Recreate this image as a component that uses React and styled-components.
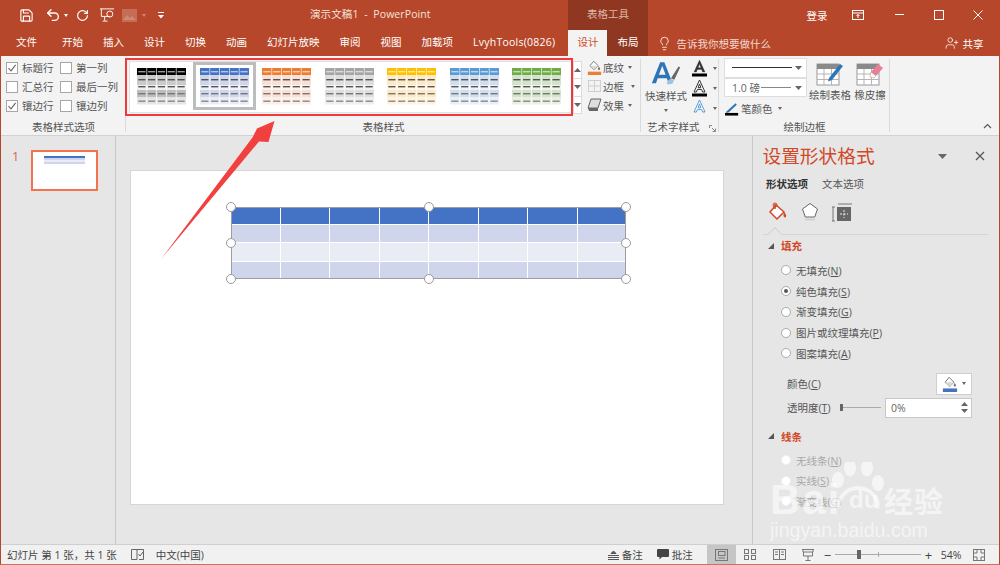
import React from "react";
import styled, { createGlobalStyle } from "styled-components";
import { Save, Undo2, RotateCw, Lightbulb, UserPlus } from "lucide-react";

const FONT = `"Open Sans", "Noto Sans CJK SC", "Noto Sans", sans-serif`;
const BRAND = "#b7472a";
const DARK = "#8f3720";
const ACCENT = "#d24726";

const Global = createGlobalStyle`
  html, body { margin: 0; padding: 0; background: #e6e6e6; }
  * { box-sizing: border-box; }
  body { font-family: ${FONT}; font-size: 10.5px; color: #444; }
`;

const Window = styled.div`
  position: relative; width: 1000px; height: 565px; overflow: hidden;
  display: flex; flex-direction: column; background: #e6e6e6;
  border-left: 1px solid ${BRAND}; border-right: 1px solid ${BRAND}; border-bottom: 1px solid #c9735c;
`;
/* ---------- title ---------- */
const TitleBar = styled.div`display: flex; height: 30px; background: ${BRAND}; color: #fff; margin-left: -1px;`;
const Qat = styled.div`width: 310px; display: flex; align-items: center; padding-left: 19px; color: #fff;`;
const QatItem = styled.span`display: inline-flex; align-items: center; margin-right: ${p => p.$gap ?? 0}px; margin-left: ${p => p.$ml ?? 0}px; opacity: ${p => p.$dim ? 0.35 : 1};`;
const DocTitle = styled.div`width: 258px; font-size: 10.5px; line-height: 29px; color: #f6e4de; letter-spacing: .1px; white-space: pre;`;
const ContextLabel = styled.div`width: 80px; background: ${DARK}; color: #dfb7a9; font-size: 10.5px; line-height: 29px; text-align: center;`;
const TitleRight = styled.div`flex: 1; display: flex; align-items: center; padding-left: 158px; font-size: 10.5px;`;
const TitleBtn = styled.span`display: inline-flex; width: ${p => p.$w}px; justify-content: center; color: #fff;`;

/* ---------- tabs ---------- */
const TabBar = styled.div`display: flex; height: 26px; background: ${BRAND}; padding-left: 6px; margin-left: -1px; align-items: stretch;`;
const Tab = styled.div`
  padding: 0 10px; line-height: 25px; font-size: 10.5px; white-space: nowrap;
  color: ${p => p.$active ? ACCENT : "#fff"};
  background: ${p => p.$active ? "#f3f3f3" : p.$ctx ? DARK : "transparent"};
  letter-spacing: ${p => p.$wide ? ".25px" : "0"};
  margin-left: ${p => p.$ml ?? 0}px;
`;
const ContextTab = styled(Tab)`padding: 0; width: ${p => p.$w}px; text-align: center;`;
const Tell = styled.div`display: flex; align-items: center; gap: 4px; margin-left: 9px; color: #f3d9d0; font-size: 10.5px; width: 288px;`;
const Share = styled.div`display: flex; align-items: center; gap: 3px; color: #fff; font-size: 10.5px;`;

/* ---------- ribbon ---------- */
const Ribbon = styled.div`position: relative; display: flex; height: 80px; background: #f3f3f3; border-bottom: 1px solid #d2d2d2;`;
const Group = styled.div`
  position: relative; width: ${p => p.$w}px; display: flex; flex-direction: column; height: 79px;
  &::after { content: ""; position: absolute; right: 0; top: 3px; bottom: 3px; width: 1px; background: #dadada; }
`;
const GroupBody = styled.div`flex: 1; display: flex; min-height: 0;`;
const GroupLabel = styled.div`
  height: 17px; line-height: 18px; font-size: 10.5px; color: #555; position: relative;
  text-align: ${p => p.$left ? "left" : "center"}; padding-left: ${p => p.$left ? "6px" : "0"};
`;
const Launcher = styled.svg`position: absolute; right: 3px; top: 7px;`;

const OptionGrid = styled.div`display: grid; grid-template-columns: 54px 60px; grid-auto-rows: 19px; padding: 2px 0 0 5px;`;
const CheckRow = styled.label`display: flex; align-items: center; gap: 4px; white-space: nowrap; color: #555;`;
const CheckBox = styled.span`
  width: 12px; height: 12px; background: #fff; border: 1px solid #a6a6a6; display: inline-flex;
  align-items: center; justify-content: center; flex: none;
`;

const GalleryWrap = styled.div`display: flex; padding: 5px 0 0 3px; height: 58px;`;
const Gallery = styled.div`
  width: 444px; height: 52px; background: #fff; border: 1px solid #e2e2e2;
  display: flex; align-items: flex-start; padding: 0 0 0 .5px; border-right: 0;
`;
const GalleryCell = styled.div`
  width: 62.5px; height: 48px; flex: none; padding: 6px 0 0 6.5px;
  ${p => p.$selected && `outline: 3px solid #bdbdbd; outline-offset: -3px;`}
`;
const Scroller = styled.div`width: 9px; height: 53px; display: flex; flex-direction: column; background: #fff; border: 1px solid #dcdcdc; margin-right: 5px;`;
const ScrollBtn = styled.div`flex: 1; display: flex; align-items: center; justify-content: center; border-top: ${p => p.$first ? 0 : "1px solid #dcdcdc"};`;
const EffectList = styled.div`display: flex; flex-direction: column; gap: 1px; margin-top: -3px;`;
const EffectItem = styled.div`display: flex; align-items: center; gap: 1px; height: 18.5px; white-space: nowrap; color: #555;`;
const Caret = styled.span`
  display: inline-block; width: 0; height: 0; margin-left: ${p => p.$ml ?? 3}px; margin-top: ${p => p.$mt ?? 0}px;
  border-left: 2.5px solid transparent; border-right: 2.5px solid transparent; border-top: 3px solid ${p => p.$c ?? "#666"};
`;
const Highlight = styled.div`position: absolute; left: 124px; top: 2px; width: 448px; height: 58px; border: 2px solid #f0393c; pointer-events: none;`;

const ArtBig = styled.div`width: 50px; display: flex; flex-direction: column; align-items: center; padding-top: 5px;`;
const BigLabel = styled.div`font-size: 10.5px; line-height: 14px; white-space: nowrap; margin-top: ${p => p.$mt ?? 2}px; color: #555;`;
const ArtSmall = styled.div`display: flex; flex-direction: column; gap: 2px; padding-top: 3px;`;
const ArtItem = styled.div`display: flex; align-items: center; height: 18px; gap: 2px;`;

const PenCol = styled.div`width: 90px; padding: 2px 0 0 5px; display: flex; flex-direction: column; flex: none;`;
const PenBox = styled.div`
  width: 83px; height: ${p => p.$h}px; background: #fff; border: 1px solid #dedede; display: flex; align-items: center;
  justify-content: space-between; padding: 0 4px 0 7px; font-size: 10.5px; color: #666;
`;
const PenRule = styled.svg`margin-left: -4px;`;
const PenColor = styled.div`display: flex; align-items: center; gap: 2px; height: 20px; padding: 3px 0 0 1px; color: #555;`;
const DrawBtn = styled.div`width: ${p => p.$w}px; display: flex; flex-direction: column; align-items: center; padding-top: 4px; flex: none;`;
const Collapse = styled.svg`position: absolute; right: 7px; bottom: 6px;`;

/* ---------- workspace ---------- */
const Workspace = styled.div`flex: 1; display: flex; min-height: 0; border-bottom: 1px solid #cfcfcf;`;
const SlidePane = styled.div`width: 115px; flex: none; border-right: 1px solid #c8c8c8; display: flex; padding: 14px 0 0 11px; gap: 12px;`;
const SlideNo = styled.div`width: 7px; font-size: 12.5px; line-height: 14px; color: #d8644a;`;
const SlideThumb = styled.div`width: 67px; height: 41px; background: #fff; border: 2px solid #f4734f; padding: 4px 0 0 11px;`;
const ThumbBar = styled.div`width: 41px; height: ${p => p.$h}px; background: ${p => p.$c};`;
const Editor = styled.div`flex: 1; padding: 34px 0 0 14px;`;
const Slide = styled.div`position: relative; width: 594px; height: 335px; background: #fff; border: 1px solid #d6d6d6;`;
const Shape = styled.div`position: absolute; left: 100px; top: 36px; width: 395px; height: 72px; outline: 1px solid #9d9d9d; outline-offset: -1px;`;
const TableGrid = styled.div`display: grid; grid-template-rows: 17px 17px 18px 17px; height: 100%; gap: 1px; background: #fff;`;
const TableRow = styled.div`display: grid; grid-template-columns: repeat(8, 1fr); gap: 1px;`;
const TableCell = styled.div`background: ${p => p.$c};`;
const Handle = styled.span`
  position: absolute; width: 10px; height: 10px; border-radius: 50%; background: #fff; border: 1.5px solid #9b9b9b;
  left: ${p => p.$x}%; top: ${p => p.$y}%; transform: translate(-50%, -50%);
`;

/* ---------- task pane ---------- */
const TaskPane = styled.div`width: 247px; flex: none; border-left: 1px solid #c8c8c8; position: relative; overflow: hidden; color: #555;`;
const PaneHead = styled.div`display: flex; align-items: center; height: 40px; padding: 0 14px 0 9.5px;`;
const PaneTitle = styled.div`flex: 1; font-size: 18.7px; color: ${ACCENT}; line-height: 38px;`;
const PaneMenu = styled.svg`margin-right: 28px;`;
const PaneTabs = styled.div`display: flex; gap: 14px; padding: 0 0 0 13px; height: 19px; line-height: 16px;`;
const PaneTab = styled.div`font-weight: ${p => p.$on ? 700 : 400}; color: ${p => p.$on ? "#333" : "#555"};`;
const PaneIcons = styled.div`display: flex; gap: 13.5px; align-items: flex-start; padding: 7px 0 0 14px; height: 39px;`;
const Rule = styled.div`position: relative; height: 1px; margin: 0 11px 0 10px; background: #d4d4d4;
  &::before { content: ""; position: absolute; left: 7px; top: -5px; width: 9px; height: 9px; border-left: 1px solid #d4d4d4; border-top: 1px solid #d4d4d4; background: #e6e6e6; transform: rotate(45deg); }
`;
const SectionHead = styled.div`display: flex; align-items: center; gap: 7px; padding-left: 15px; height: 17px; margin-top: ${p => p.$mt}px; font-weight: 700; color: ${ACCENT};`;
const Tri = styled.span`width: 0; height: 0; border-bottom: 6px solid #555; border-left: 6px solid transparent;`;
const RadioList = styled.div`display: flex; flex-direction: column; padding: ${p => p.$pt}px 0 0 28px;`;
const RadioRow = styled.div`display: flex; align-items: center; gap: 5px; height: ${p => p.$h ?? 20.75}px; color: ${p => p.$off ? "#a8a8a8" : "#555"}; white-space: nowrap;`;
const Radio = styled.span`
  width: 10px; height: 10px; border-radius: 50%; flex: none; background: #fff; border: 1px solid ${p => p.$off ? "#f2f2f2" : "#ababab"};
  display: inline-flex; align-items: center; justify-content: center;
  &::after { content: ""; width: 4px; height: 4px; border-radius: 50%; background: ${p => p.$on ? "#555" : "transparent"}; }
`;
const U = styled.span`text-decoration: underline;`;
const ColorRow = styled.div`display: flex; align-items: center; justify-content: space-between; padding: 0 27px 0 34px; height: ${p => p.$h}px; margin-top: ${p => p.$mt ?? 0}px;`;
const ColorBtn = styled.div`width: 36px; height: 22px; background: #fff; border: 1px solid #cfcfcf; display: flex; align-items: center; justify-content: center; gap: 4px;`;
const Slider = styled.div`position: relative; width: 41px; height: 1px; background: #aaa;
  &::before { content: ""; position: absolute; left: 0; top: -3px; width: 3px; height: 7px; background: #666; }
`;
const SpinInput = styled.div`width: 87px; height: 20px; background: #fff; border: 1px solid #c8c8c8; display: flex; align-items: center; justify-content: space-between; padding: 0 3px 0 5px; color: #666;`;
const Spin = styled.div`display: flex; flex-direction: column; gap: 3px;`;
const SliderGroup = styled.div`display: flex; align-items: center; gap: 4px;`;

/* ---------- watermark + arrow ---------- */
const Watermark = styled.div`position: absolute; left: 769px; top: 466px; width: 185px; height: 80px; color: rgba(255,255,255,.6); pointer-events: none;`;
const WmTop = styled.div`display: flex; align-items: flex-end; height: 50px; font-family: "Liberation Sans", sans-serif; font-weight: 700; line-height: 32px;`;
const WmBai = styled.span`font-size: 42px; width: 79px; letter-spacing: 2px;`;
const WmDu = styled.span`font-size: 24px; width: 35px;`;
const WmCn = styled.span`font-size: 29px; font-family: "Noto Sans CJK SC", sans-serif; font-weight: 700; letter-spacing: 1px; line-height: 32px;`;
const WmUrl = styled.div`font-family: "Liberation Sans", sans-serif; font-size: 19.6px; line-height: 28px; white-space: nowrap;`;
const WmPaw = styled.svg`position: absolute; left: 58px; top: -4px;`;
const ArrowLayer = styled.svg`position: absolute; left: -1px; top: 0; pointer-events: none;`;

/* ---------- status ---------- */
const Status = styled.div`height: 19px; background: #f1f1f1; display: flex; align-items: center; padding-left: 6px; color: #444; flex: none;`;
const StatusText = styled.span`margin-right: ${p => p.$mr ?? 0}px; margin-left: ${p => p.$ml ?? 0}px; white-space: nowrap;`;
const StatusBtn = styled.span`display: inline-flex; align-items: center; gap: 3px; margin-right: ${p => p.$mr ?? 0}px; white-space: nowrap;`;
const ViewBtn = styled.span`width: 29px; height: 19px; display: inline-flex; align-items: center; justify-content: center; background: ${p => p.$on ? "#c6c6c6" : "transparent"};`;
const ZoomTrack = styled.span`position: relative; width: 86px; height: 1px; background: #aaa; margin: 0 3px;
  &::before { content: ""; position: absolute; left: 22px; top: -4px; width: 4px; height: 9px; background: #666; }
  &::after { content: ""; position: absolute; left: 43px; top: -2px; width: 1px; height: 5px; background: #aaa; }
`;
const ZoomGlyph = styled.span`font-size: 13px; line-height: 18px; width: 9px; text-align: center; color: #444;`;

const styles = [
  ["#000000", "#cbcbcb", "#efefef", "#bdbdbd", "#e5e5e5"],
  ["#4472c4", "#cfd5ea", "#eef0f8", "#cfd5ea", "#e9ebf5"],
  ["#ed7d31", "#f9dfd4", "#fdf3ee", "#f9dfd4", "#fceee8"],
  ["#a5a5a5", "#dedede", "#f1f1f1", "#dedede", "#eeeeee"],
  ["#ffc000", "#fde9c4", "#fff6e5", "#fde9c4", "#fef3df"],
  ["#5b9bd5", "#d0deef", "#edf2f9", "#d0deef", "#e8eff7"],
  ["#70ad47", "#d3e4ca", "#eef5ea", "#d3e4ca", "#e7f0e1"],
];

function TableStyle({ colors }) {
  const rows = [[0, 7], [7, 10], [17, 5], [22, 7.5], [29.5, 7]];
  const dash = ["#ffffff99", "#555", "#555", "#777", "#888"];
  return (
    <svg width="49" height="37" viewBox="0 0 49 37">
      {rows.map(([y, h], r) => <rect key={r} x="0" y={y} width="49" height={h} fill={colors[r]} />)}
      {[1, 2, 3, 4].map(c => <rect key={c} x={c * 9.8 - 0.4} y="0" width="0.8" height="37" fill="#ffffff" opacity=".8" />)}
      {rows.map(([y, h], r) => [0, 1, 2, 3, 4].map(c => (
        <rect key={`${r}${c}`} x={c * 9.8 + 1.3} y={[3, 11, 18, 25, 32.5][r]} width="7.2" height="1.4" fill={dash[r]} />
      )))}
    </svg>
  );
}

const Check = ({ on }) => (
  <CheckBox>{on && <svg width="10" height="10" viewBox="0 0 10 10"><path d="M1.5 5.2 4 7.8 8.6 1.8" fill="none" stroke="#666" strokeWidth="1.1" /></svg>}</CheckBox>
);
const Bucket = ({ bar = "#ed7d31", w = 18 }) => (
  <svg width={w} height={w} viewBox="0 0 18 18">
    <path d="M8 1.5 13.5 7l-5 5L3.5 7z" fill="#fff" stroke="#666" />
    <path d="M3.5 7h10l-5 5z" fill="#d9d9d9" />
    <path d="M14 7.5c1.2 1.6 1.8 2.6 1.8 3.3a1.3 1.3 0 0 1-2.6 0c0-.7.3-1.7.8-3.3z" fill="#777" />
    <rect x="1" y="14" width="16" height="4" fill={bar} />
  </svg>
);
const LetterA = ({ stroke = "#333", fill = "#333", bar = "#000", o }) => (
  <svg width="17" height="18" viewBox="0 0 17 18">
    <path d="M8.5 1 3 13h2.4l1-2.6h4.2l1 2.6H14zM7.1 8.7l1.4-3.8 1.4 3.8z" fill={o ? "#fff" : fill} stroke={stroke} strokeWidth={o ? 1 : .3} />
    {bar && <rect x="1" y="14.5" width="15" height="3" fill={bar} />}
  </svg>
);
const TableDraw = ({ children }) => (
  <svg width="28" height="26" viewBox="0 0 28 26">
    <rect x="1" y="4" width="22" height="21" fill="#fff" stroke="#999" />
    <rect x="1" y="4" width="22" height="5" fill="#8a8a8a" />
    <path d="M1 14h22M1 19.500h22M8 9v16M15.500 9v16" stroke="#b5b5b5" />
    {children}
  </svg>
);
const Tiny = ({ up }) => (
  <svg width="7" height="4" viewBox="0 0 7 4"><path d={up ? "M3.5 0 7 4H0z" : "M0 0h7L3.5 4z"} fill="#666" /></svg>
);
const Lbl = ({ t, k }) => <span>{t}(<U>{k}</U>)</span>;

export default function App() {
  return (
    <Window>
      <Global />
      <TitleBar>
        <Qat>
          <QatItem $gap={11}><Save size={15} strokeWidth={1.8} /></QatItem>
          <QatItem $gap={8}><Undo2 size={16} strokeWidth={2} /><Caret $c="#fff" /></QatItem>
          <QatItem $gap={10}><RotateCw size={13} strokeWidth={2.2} /></QatItem>
          <QatItem $gap={7}>
            <svg width="16" height="16" viewBox="0 0 17 16" fill="none" stroke="#fff"><path d="M1 1.5h15M2.5 1.5v8h9" /><circle cx="11.5" cy="7" r="3.2" /><path d="M6 10v4M4 14.5h5" /></svg>
          </QatItem>
          <QatItem $dim>
            <svg width="15" height="13" viewBox="0 0 15 13"><rect width="15" height="13" fill="#fff" opacity=".6" /><path d="M1 11l4-5 3 3 2-2 4 4z" fill="#fff" /></svg>
            <Caret $c="#fff" $ml={5} />
          </QatItem>
          <QatItem $ml={12}>
            <svg width="6" height="7" viewBox="0 0 6 7"><path d="M0 0h6v1H0zM0 3h6L3 6.5z" fill="#fff" /></svg>
          </QatItem>
        </Qat>
        <DocTitle>{"演示文稿1  -  PowerPoint"}</DocTitle>
        <ContextLabel>表格工具</ContextLabel>
        <TitleRight>
          <TitleBtn $w={22}>登录</TitleBtn>
          <TitleBtn $w={60}>
            <svg width="12" height="10" viewBox="0 0 12 10" fill="none" stroke="#fff"><rect x=".5" y=".5" width="11" height="9" /><path d="M.5 3h11M6 8V4.5M4.5 6 6 4.5 7.5 6" /></svg>
          </TitleBtn>
          <TitleBtn $w={22}><svg width="9" height="2"><rect width="9" height="1" fill="#fff" /></svg></TitleBtn>
          <TitleBtn $w={57}><svg width="10" height="10" fill="none" stroke="#fff"><rect x=".5" y=".5" width="9" height="9" /></svg></TitleBtn>
          <TitleBtn $w={22}><svg width="10" height="10" stroke="#fff"><path d="M.5.5l9 9M9.5.5l-9 9" /></svg></TitleBtn>
        </TitleRight>
      </TitleBar>

      <TabBar>
        <Tab>文件</Tab>
        <Tab $ml={5}>开始</Tab><Tab>插入</Tab><Tab>设计</Tab><Tab>切换</Tab><Tab>动画</Tab>
        <Tab>幻灯片放映</Tab><Tab>审阅</Tab><Tab>视图</Tab><Tab>加载项</Tab><Tab $wide>LvyhTools(0826)</Tab>
        <ContextTab $active $w={39} $ml={3}>设计</ContextTab>
        <ContextTab $ctx $w={41}>布局</ContextTab>
        <Tell><Lightbulb size={15} strokeWidth={1.3} color="#fff" />告诉我你想要做什么</Tell>
        <Share><UserPlus size={14} strokeWidth={1.3} />共享</Share>
      </TabBar>

      <Ribbon>
        <Group $w={125}>
          <GroupBody>
            <OptionGrid>
              <CheckRow><Check on />标题行</CheckRow><CheckRow><Check />第一列</CheckRow>
              <CheckRow><Check />汇总行</CheckRow><CheckRow><Check />最后一列</CheckRow>
              <CheckRow><Check on />镶边行</CheckRow><CheckRow><Check />镶边列</CheckRow>
            </OptionGrid>
          </GroupBody>
          <GroupLabel>表格样式选项</GroupLabel>
        </Group>
        <Group $w={515}>
          <GroupBody>
            <GalleryWrap>
              <Gallery>
                {styles.map((c, i) => (
                  <GalleryCell key={i} $selected={i === 1}><TableStyle colors={c} /></GalleryCell>
                ))}
              </Gallery>
              <Scroller>
                <ScrollBtn $first><Tiny up /></ScrollBtn>
                <ScrollBtn><Tiny /></ScrollBtn>
                <ScrollBtn><Tiny /></ScrollBtn>
              </Scroller>
              <EffectList>
                <EffectItem><Bucket w={15} />底纹<Caret /></EffectItem>
                <EffectItem>
                  <svg width="15" height="14" viewBox="0 0 15 14" fill="none" stroke="#cfcfcf"><rect x="1.5" y="1.5" width="12" height="11" /><path d="M7.500 1.500v11M1.500 7h12" /></svg>
                  边框<Caret $ml={6} />
                </EffectItem>
                <EffectItem>
                  <svg width="15" height="14" viewBox="0 0 15 14"><path d="M4 1h10l-3 9H1z" fill="#ddd" stroke="#666" /><path d="M1 10h10v3H2z" fill="#666" /></svg>
                  效果<Caret />
                </EffectItem>
              </EffectList>
            </GalleryWrap>
          </GroupBody>
          <GroupLabel>表格样式</GroupLabel>
        </Group>
        <Group $w={78}>
          <GroupBody>
            <ArtBig>
              <svg width="30" height="26" viewBox="0 0 36 30">
                <path d="M11 1h5l10 25h-5l-2-6H8l-2 6H1zM9.5 16h8L13.5 5z" fill="#2e75b6" />
                <path d="M24 20 33 6l2 1-7 15z" fill="#666" /><path d="M19 27c0-4 3-6 5.500-6l3 1.500c0 3-4 6-8.500 4.500z" fill="#9dc3e6" />
              </svg>
              <BigLabel>快速样式</BigLabel>
              <Caret $ml={0} $mt={6} />
            </ArtBig>
            <ArtSmall>
              <ArtItem><LetterA /><Caret /></ArtItem>
              <ArtItem><LetterA o /><Caret /></ArtItem>
              <ArtItem><LetterA o stroke="#5b9bd5" bar={null} /><Caret /></ArtItem>
            </ArtSmall>
          </GroupBody>
          <GroupLabel $left>艺术字样式
            <Launcher width="7" height="7" viewBox="0 0 7 7" fill="none" stroke="#888"><path d="M.5 3V.5H3M3 3l3 3M6.500 3.500v3h-3" /></Launcher>
          </GroupLabel>
        </Group>
        <Group $w={171}>
          <GroupBody>
            <PenCol>
              <PenBox $h={20}>
                <svg width="60" height="2"><rect width="60" height="1" fill="#333" /></svg><Tiny />
              </PenBox>
              <PenBox $h={19}>
                <span>1.0 磅</span><PenRule width="30" height="2"><rect width="30" height="1" fill="#888" /></PenRule><Tiny />
              </PenBox>
              <PenColor>
                <svg width="14" height="14" viewBox="0 0 16 15"><path d="M2 10 12 1l1.500 1.500L4 11.500 1.500 12z" fill="#2e75b6" /><rect x="0" y="12" width="15" height="3" fill="#000" /></svg>
                笔颜色<Caret />
              </PenColor>
            </PenCol>
            <DrawBtn $w={42}>
              <TableDraw><path d="M13 18 24 4l3 2-11 14-4 1.500z" fill="#2e75b6" /></TableDraw>
              <BigLabel>绘制表格</BigLabel>
            </DrawBtn>
            <DrawBtn $w={38}>
              <TableDraw><path d="M15 12 22 4l5 4-7 8z" fill="#e77f96" /><path d="M15 12l5 4-2 2-4-1z" fill="#fff" stroke="#c77" strokeWidth=".5" /></TableDraw>
              <BigLabel>橡皮擦</BigLabel>
            </DrawBtn>
          </GroupBody>
          <GroupLabel>绘制边框</GroupLabel>
        </Group>
        <Highlight />
        <Collapse width="9" height="6" viewBox="0 0 9 6" fill="none" stroke="#555" strokeWidth="1.100"><path d="M1 5l3.500-3.500L8 5" /></Collapse>
      </Ribbon>

      <Workspace>
        <SlidePane>
          <SlideNo>1</SlideNo>
          <SlideThumb>
            <ThumbBar $h={2} $c="#4472c4" />
            <ThumbBar $h={2} $c="#cfd5ea" />
            <ThumbBar $h={2} $c="#e9ebf5" />
            <ThumbBar $h={2} $c="#cfd5ea" />
          </SlideThumb>
        </SlidePane>
        <Editor>
          <Slide>
            <Shape>
              <TableGrid>
                {["#4472c4", "#cfd5ea", "#e9ebf5", "#cfd5ea"].map((c, r) => (
                  <TableRow key={r}>{Array.from({ length: 8 }, (_, i) => <TableCell key={i} $c={c} />)}</TableRow>
                ))}
              </TableGrid>
              {[[0, 0], [50, 0], [100, 0], [0, 50], [100, 50], [0, 100], [50, 100], [100, 100]].map(([x, y]) => (
                <Handle key={`${x}-${y}`} $x={x} $y={y} />
              ))}
            </Shape>
          </Slide>
        </Editor>
        <TaskPane>
          <PaneHead>
            <PaneTitle>设置形状格式</PaneTitle>
            <PaneMenu width="9" height="5"><path d="M0 0h9L4.500 5z" fill="#666" /></PaneMenu>
            <svg width="10" height="10" stroke="#555" strokeWidth="1.200"><path d="M1 1l8 8M9 1 1 9" /></svg>
          </PaneHead>
          <PaneTabs><PaneTab $on>形状选项</PaneTab><PaneTab>文本选项</PaneTab></PaneTabs>
          <PaneIcons>
            <svg width="20" height="20" viewBox="0 0 20 20">
              <path d="M9 3 17 10l-7 7-7-7z" fill="#fff" stroke={ACCENT} strokeWidth="1.500" />
              <path d="M8 2V7" stroke={ACCENT} strokeWidth="1.500" /><circle cx="8" cy="3" r="2" fill="none" stroke={ACCENT} />
              <path d="M17 10c1.500 1.500 2.500 3 2 5-1 1-2.500 0-2.500-1.500z" fill={ACCENT} />
            </svg>
            <svg width="18" height="20" viewBox="0 0 18 20">
              <path d="M9 1.500 16.500 7l-2.800 8H4.300L1.500 7z" fill="#fff" stroke="#666" />
              <path d="M4 17.500h10" stroke="#ccc" strokeWidth="1.500" />
            </svg>
            <svg width="20" height="20" viewBox="0 0 20 20">
              <path d="M6 2h14M1 5v14M0 5h3M0 19h3" stroke="#777" fill="none" />
              <rect x="5" y="5" width="14" height="14" fill="#666" />
              <path d="M12 8v8M8 12h8" stroke="#eee" strokeDasharray="2 1.500" />
            </svg>
          </PaneIcons>
          <Rule />
          <SectionHead $mt={2}><Tri />填充</SectionHead>
          <RadioList $pt={6}>
            <RadioRow><Radio /><Lbl t="无填充" k="N" /></RadioRow>
            <RadioRow><Radio $on /><Lbl t="纯色填充" k="S" /></RadioRow>
            <RadioRow><Radio /><Lbl t="渐变填充" k="G" /></RadioRow>
            <RadioRow><Radio /><Lbl t="图片或纹理填充" k="P" /></RadioRow>
            <RadioRow><Radio /><Lbl t="图案填充" k="A" /></RadioRow>
          </RadioList>
          <ColorRow $h={22} $mt={9}>
            <Lbl t="颜色" k="C" />
            <ColorBtn><Bucket bar="#4472c4" w={16} /><Caret $ml={0} /></ColorBtn>
          </ColorRow>
          <ColorRow $h={20} $mt={3}>
            <Lbl t="透明度" k="T" />
            <SliderGroup>
              <Slider />
              <SpinInput>0%<Spin><Tiny up /><Tiny /></Spin></SpinInput>
            </SliderGroup>
          </ColorRow>
          <SectionHead $mt={10}><Tri />线条</SectionHead>
          <RadioList $pt={5}>
            <RadioRow $off $h={20.500}><Radio $off /><Lbl t="无线条" k="N" /></RadioRow>
            <RadioRow $off $h={20.500}><Radio $off /><Lbl t="实线" k="S" /></RadioRow>
            <RadioRow $off $h={20.500}><Radio $off /><Lbl t="渐变线" k="G" /></RadioRow>
          </RadioList>
        </TaskPane>
      </Workspace>

      <Status>
        <StatusText $mr={14}>幻灯片 第 1 张，共 1 张</StatusText>
        <StatusBtn $mr={12}>
          <svg width="13" height="11" viewBox="0 0 13 11" fill="none" stroke="#666"><path d="M.5.5h5.500v10H.5zM6 .5h6.500v10H8" /><path d="M7.500 5l1.500 2 3-4" /></svg>
        </StatusBtn>
        <StatusText $mr={404}>中文(中国)</StatusText>
        <StatusBtn $mr={14}>
          <svg width="11" height="10" viewBox="0 0 11 10" stroke="#555"><path d="M5.500 1 3 3.500h5zM0 5.500h11M0 7.500h11M0 9.500h11" fill="#555" /></svg>
          备注
        </StatusBtn>
        <StatusBtn $mr={14}>
          <svg width="12" height="11" viewBox="0 0 12 11"><path d="M1 0h10a1 1 0 0 1 1 1v6a1 1 0 0 1-1 1H5L2.500 10.500V8H1a1 1 0 0 1-1-1V1a1 1 0 0 1 1-1z" fill="#444" /></svg>
          批注
        </StatusBtn>
        <ViewBtn $on>
          <svg width="13" height="12" viewBox="0 0 13 12" fill="none" stroke="#777"><rect x=".5" y=".5" width="12" height="11" /><rect x="3.500" y="2.500" width="6.500" height="4" /><path d="M3.500 9h6.500" /></svg>
        </ViewBtn>
        <ViewBtn>
          <svg width="12" height="11" viewBox="0 0 12 11" fill="none" stroke="#777"><rect x=".5" y=".5" width="4" height="4" /><rect x="7.500" y=".5" width="4" height="4" /><rect x=".5" y="6.500" width="4" height="4" /><rect x="7.500" y="6.500" width="4" height="4" /></svg>
        </ViewBtn>
        <ViewBtn>
          <svg width="13" height="11" viewBox="0 0 13 11" fill="none" stroke="#777"><rect x=".5" y=".5" width="12" height="10" /><path d="M6.500.5v10M2 3h3M2 5.500h3M8 3h3M8 5.500h3" /></svg>
        </ViewBtn>
        <ViewBtn>
          <svg width="12" height="12" viewBox="0 0 12 12" fill="none" stroke="#777"><path d="M0 .5h12M1 .5v2.500h10V.5M1.500 3v4h9V3M6 7v4M3.500 11.500h5" /></svg>
        </ViewBtn>
        <ZoomGlyph>−</ZoomGlyph>
        <ZoomTrack />
        <ZoomGlyph>+</ZoomGlyph>
        <StatusText $ml={8} $mr={11}>54%</StatusText>
        <StatusBtn>
          <svg width="12" height="12" viewBox="0 0 12 12" fill="none" stroke="#777"><rect x=".5" y=".5" width="11" height="11" /><path d="M.5 4 4 4 4 .5M11.500 4H8V.5M.5 8H4v3.500M11.500 8H8v3.500" /></svg>
        </StatusBtn>
      </Status>

      <ArrowLayer width="1000" height="565" viewBox="0 0 1000 565">
        <path d="M274.500 121 257 128.500 252.500 137.500 161.500 258.500 259 141.500 268.500 142z" fill="#f2403f" />
      </ArrowLayer>
      <Watermark>
        <WmPaw width="62" height="50" viewBox="0 0 62 50" fill="currentColor">
          <ellipse cx="10" cy="18" rx="6" ry="8" /><ellipse cx="22" cy="6" rx="6" ry="8.500" />
          <ellipse cx="39" cy="6" rx="6" ry="8.500" /><ellipse cx="50" cy="21" rx="6" ry="8" />
          <path d="M11 46c-2-8 6-20 19-20s22 12 19 20" fill="none" stroke="currentColor" strokeWidth="4" />
        </WmPaw>
        <WmTop>
          <WmBai>Bai</WmBai>
          <WmDu>du</WmDu>
          <WmCn>经验</WmCn>
        </WmTop>
        <WmUrl>jingyan.baidu.com</WmUrl>
      </Watermark>
    </Window>
  );
}
